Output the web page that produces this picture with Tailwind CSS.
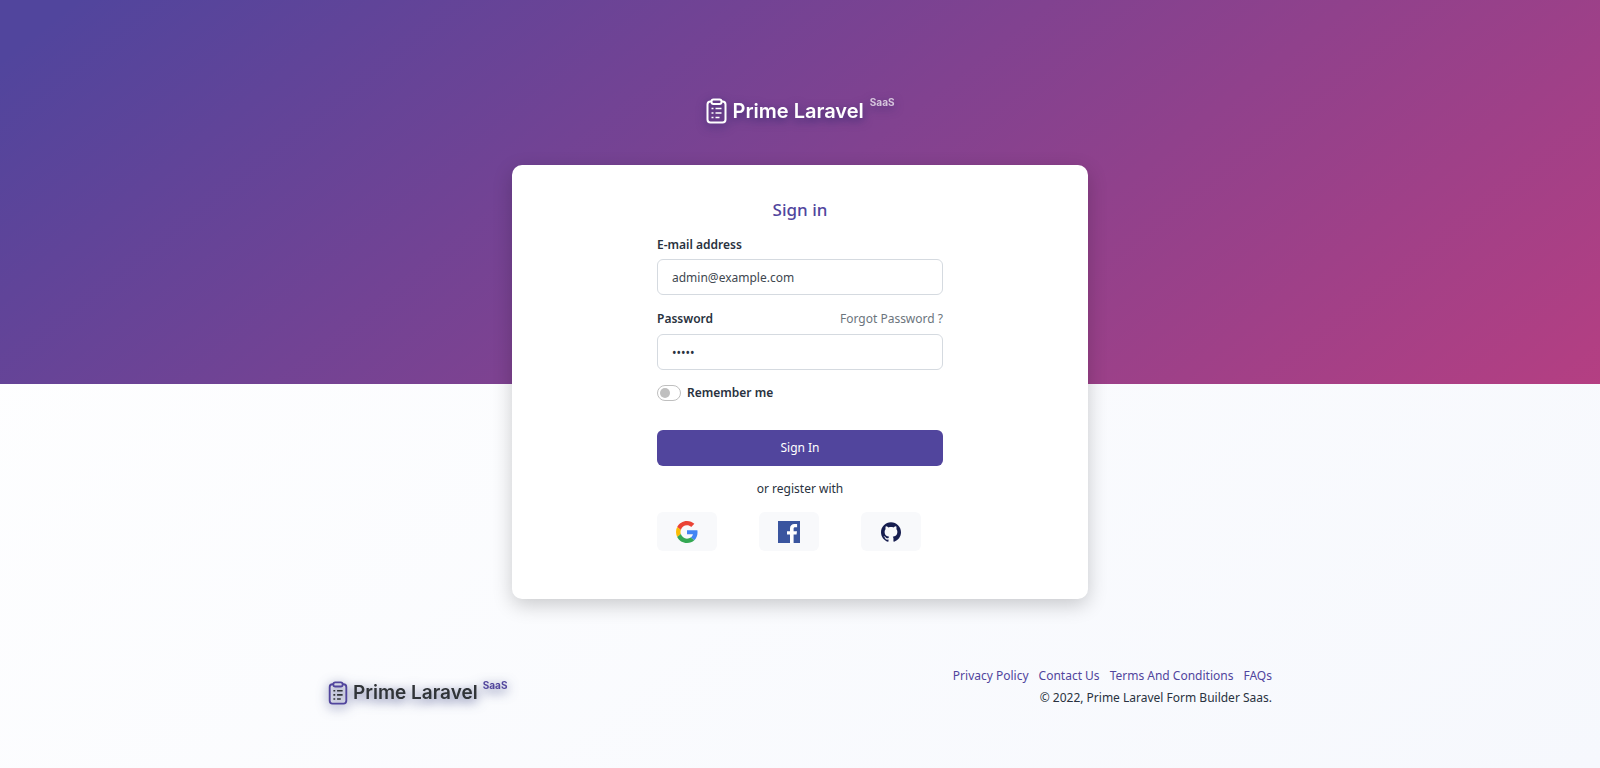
<!DOCTYPE html>
<html lang="en">
<head>
  <meta charset="UTF-8" />
  <meta name="viewport" content="width=device-width, initial-scale=1.0" />
  <title>Sign in | Prime Laravel</title>
  <script src="https://cdn.jsdelivr.net/npm/@tailwindcss/browser@4"></script>
  <style>
    body { font-family: 'Noto Sans', 'Open Sans', sans-serif; }
  </style>
</head>
<body class="relative min-h-screen flex flex-col items-center text-xs leading-5 text-[#293240] bg-[linear-gradient(141.55deg,#ffffff_3.46%,#f6f8fd_99.86%)]">
  <!-- Top background -->
  <div class="absolute inset-x-0 top-0 h-1/2 bg-[#51459d] bg-[linear-gradient(141.55deg,rgba(81,69,157,0)_3.46%,rgba(255,58,110,0.57)_99.86%)]"></div>

  <!-- Header logo -->
  <header class="relative pt-[98px] pb-10">
    <a href="#" class="flex items-start gap-1.5 h-[27px] text-white font-['Inter'] drop-shadow-[0_3px_5px_rgba(30,30,100,0.7)]">
      <svg class="h-[26px] w-[21px]" viewBox="0 0 20 26" fill="none" stroke="currentColor" stroke-width="2" aria-hidden="true">
        <path d="M5 3.500H4a3 3 0 0 0-3 3v15a3 3 0 0 0 3 3h12a3 3 0 0 0 3-3v-15a3 3 0 0 0-3-3h-1" />
        <rect x="5" y="1.500" width="10" height="4.500" rx="2" />
        <path stroke-width="1.700" d="M5 10.500h2M9 10.500h6M5 15h2M9 15h6M5 19.500h2M9 19.500h4" />
      </svg>
      <span class="text-xl leading-[26px] font-semibold">Prime Laravel</span>
      <span class="-mt-1 text-[10px] leading-4 font-bold text-white/70">SaaS</span>
    </a>
  </header>

  <!-- Login card -->
  <main class="relative w-full max-w-xl rounded-[10px] bg-white pt-[33px] pb-12 shadow-[0_6px_20px_rgba(0,0,0,0.2)]">
    <form class="mx-auto w-[286px]">
      <h1 class="text-center text-[17px] leading-6 font-medium text-[#51459d]">Sign in</h1>

      <label for="email" class="block mt-[13px] mb-1 font-semibold">E-mail address</label>
      <input id="email" type="email" value="admin@example.com" class="block w-full h-9 px-3.5 rounded-md border border-[#d5dae0] bg-white text-[#40474f]" />

      <div class="flex justify-between mt-3.5 mb-[5px]">
        <label for="password" class="font-semibold">Password</label>
        <a href="#" class="text-[#6c757d]">Forgot Password ?</a>
      </div>
      <input id="password" type="password" value="admin" class="block w-full h-9 px-3.5 rounded-md border border-[#d5dae0] bg-white" />

      <div class="flex items-center gap-1.5 mt-[13px]">
        <input id="remember" type="checkbox" role="switch" class="appearance-none flex items-center h-4 w-6 px-0.5 rounded-full border border-[#bfbfbf] before:size-2.5 before:rounded-full before:bg-[#bfbfbf] checked:before:ml-auto" />
        <label for="remember" class="font-semibold">Remember me</label>
      </div>

      <button type="submit" class="block w-full h-9 mt-[27px] rounded-md bg-[#51459d] text-white">Sign In</button>
      <p class="my-[13px] text-center">or register with</p>

      <div class="flex gap-[42px]">
        <a href="#" aria-label="Google" class="flex items-center justify-center w-[60px] h-[39px] rounded-md bg-[#f8f9fb]">
          <svg class="size-[22px]" viewBox="0 0 48 48">
            <path fill="#EA4335" d="M24 9.500c3.540 0 6.710 1.220 9.210 3.600l6.850-6.850C35.900 2.380 30.470 0 24 0 14.620 0 6.510 5.380 2.560 13.220l7.980 6.190C12.430 13.720 17.740 9.500 24 9.500z" />
            <path fill="#4285F4" d="M46.980 24.550c0-1.570-.15-3.090-.38-4.550H24v9.020h12.940c-.58 2.960-2.260 5.480-4.780 7.180l7.730 6c4.510-4.180 7.090-10.360 7.090-17.650z" />
            <path fill="#FBBC05" d="M10.530 28.590c-.48-1.450-.76-2.990-.76-4.590s.27-3.140.76-4.590l-7.980-6.190C.92 16.460 0 20.120 0 24c0 3.880.92 7.540 2.560 10.780l7.970-6.190z" />
            <path fill="#34A853" d="M24 48c6.480 0 11.930-2.130 15.890-5.810l-7.730-6c-2.150 1.450-4.920 2.300-8.160 2.300-6.260 0-11.570-4.220-13.470-9.910l-7.980 6.190C6.510 42.620 14.620 48 24 48z" />
          </svg>
        </a>
        <a href="#" aria-label="Facebook" class="flex items-center justify-center w-[60px] h-[39px] rounded-md bg-[#f8f9fb]">
          <svg class="size-[22px]" viewBox="0 0 22 22">
            <path fill="#3a559f" d="M0 0h22v22H0z" />
            <path fill="#fff" d="M12 22v-8.500H9v-3.300h3V7.600c0-3 1.800-4.600 4.500-4.600 1.200 0 2.300.1 2.600.15v3h-1.800c-1.400 0-1.700.7-1.700 1.700v2.350h3.400l-.45 3.300h-2.950V22z" />
          </svg>
        </a>
        <a href="#" aria-label="GitHub" class="flex items-center justify-center w-[60px] h-[39px] rounded-md bg-[#f8f9fb]">
          <svg class="size-5" viewBox="0 0 24 24">
            <path fill="#161d4f" d="M12 .297c-6.630 0-12 5.373-12 12 0 5.303 3.438 9.800 8.205 11.385.6.113.82-.258.82-.577 0-.285-.01-1.040-.015-2.040-3.338.724-4.042-1.610-4.042-1.610C4.422 18.070 3.633 17.700 3.633 17.700c-1.087-.744.084-.729.084-.729 1.205.084 1.838 1.236 1.838 1.236 1.070 1.835 2.809 1.305 3.495.998.108-.776.417-1.305.760-1.605-2.665-.300-5.466-1.332-5.466-5.930 0-1.310.465-2.380 1.235-3.220-.135-.303-.540-1.523.105-3.176 0 0 1.005-.322 3.300 1.230.960-.267 1.980-.399 3-.405 1.020.006 2.040.138 3 .405 2.280-1.552 3.285-1.230 3.285-1.230.645 1.653.240 2.873.120 3.176.765.840 1.230 1.910 1.230 3.220 0 4.610-2.805 5.625-5.475 5.920.420.360.810 1.096.810 2.220 0 1.606-.015 2.896-.015 3.286 0 .315.210.690.825.570C20.565 22.092 24 17.592 24 12.297c0-6.627-5.373-12-12-12" />
          </svg>
        </a>
      </div>
    </form>
  </main>

  <!-- Footer -->
  <footer class="relative flex w-full max-w-[944px] items-start justify-between mt-16 pb-14">
    <a href="#" class="flex items-center gap-[5px] mt-[18px] text-[#303438] font-['Inter'] drop-shadow-[0_3px_6px_rgba(30,40,110,0.8)]">
      <svg class="h-6 w-5 text-[#51459d]" viewBox="0 0 20 26" fill="none" stroke="currentColor" stroke-width="2" aria-hidden="true">
        <path d="M5 3.500H4a3 3 0 0 0-3 3v15a3 3 0 0 0 3 3h12a3 3 0 0 0 3-3v-15a3 3 0 0 0-3-3h-1" />
        <rect x="5" y="1.500" width="10" height="4.500" rx="2" />
        <path stroke="#303438" stroke-width="1.700" d="M5 10.500h2M9 10.500h6M5 15h2M9 15h6M5 19.500h2M9 19.500h4" />
      </svg>
      <span class="text-[19px] leading-6 font-semibold">Prime Laravel</span>
      <span class="self-start -mt-1 text-[10px] leading-4 font-bold text-[#51459d]">SaaS</span>
    </a>
    <div class="text-right">
      <nav class="flex gap-2.5 mt-[3px] mb-0.5 text-[#51459d]">
        <a href="#">Privacy Policy</a>
        <a href="#">Contact Us</a>
        <a href="#">Terms And Conditions</a>
        <a href="#">FAQs</a>
      </nav>
      <p>© 2022, Prime Laravel Form Builder Saas.</p>
    </div>
  </footer>
</body>
</html>
